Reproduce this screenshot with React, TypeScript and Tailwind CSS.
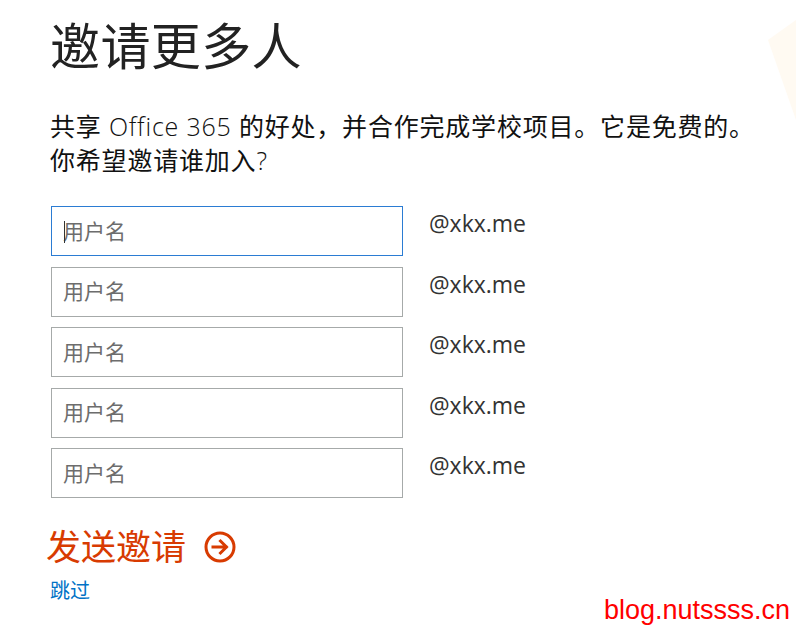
import React from 'react';

const cjk = { fontFamily: '"Segoe UI", "Open Sans", "Noto Sans CJK SC", sans-serif' };

const Row: React.FC<{ focused?: boolean }> = ({ focused }) => (
  <div className="flex items-start gap-[26px]">
    <div
      className={`relative w-[352px] h-[50px] border bg-white flex items-center pl-[11px] ${
        focused ? 'border-[#2b7cd3]' : 'border-[#a6aaa9]'
      }`}
    >
      {focused && <span className="absolute left-[12px] top-[14px] w-px h-[22px] bg-[#333]" />}
      <span className="text-[21px] text-[#6d6d6d] leading-none">用户名</span>
    </div>
    <span className="text-[23px] text-[#333] leading-none pt-[6px]">@xkx.me</span>
  </div>
);

export default function App() {
  return (
    <div className="relative w-[796px] h-[631px] bg-white overflow-hidden" style={cjk}>
      <svg className="absolute right-0 top-[20px]" width="40" height="100" viewBox="0 0 40 100">
        <polygon points="12,20 40,0 40,100" fill="#fffaf2" />
      </svg>

      <div className="flex flex-col pl-[50px] pt-[16px]">
        <h1 className="text-[50px] leading-[60px] text-[#222] tracking-[0.4px]">邀请更多人</h1>

        <p className="mt-[33px] text-[25px] leading-[34px] text-[#111] tracking-[0.8px]">
          共享 <span className="font-light">Office 365</span> 的好处，并合作完成学校项目。它是免费的。
          <br />
          你希望邀请谁加入<span className="font-light">?</span>
        </p>

        <div className="mt-[29px] ml-px flex flex-col gap-[10.5px]">
          <Row focused />
          <Row />
          <Row />
          <Row />
          <Row />
        </div>

        <button className="mt-[27px] -ml-[4px] flex items-center gap-[18px] text-[#d83b01] self-start">
          <span className="text-[35px] leading-[44px]">发送邀请</span>
          <svg width="32" height="32" viewBox="0 0 32 32" fill="none" stroke="#d83b01" strokeWidth="3">
            <circle cx="16" cy="16" r="14" />
            <path d="M9 16h13M16.5 10l6 6-6 6" strokeLinecap="square" />
          </svg>
        </button>

        <a href="#" className="mt-[9px] text-[20px] leading-[26px] text-[#0072c6] self-start">跳过</a>
      </div>

      <span
        className="absolute right-[6px] bottom-[7px] text-[27px] leading-none text-[#ff0000]"
        style={{ fontFamily: '"Liberation Sans", Arial, sans-serif' }}
      >
        blog.nutssss.cn
      </span>
    </div>
  );
}
